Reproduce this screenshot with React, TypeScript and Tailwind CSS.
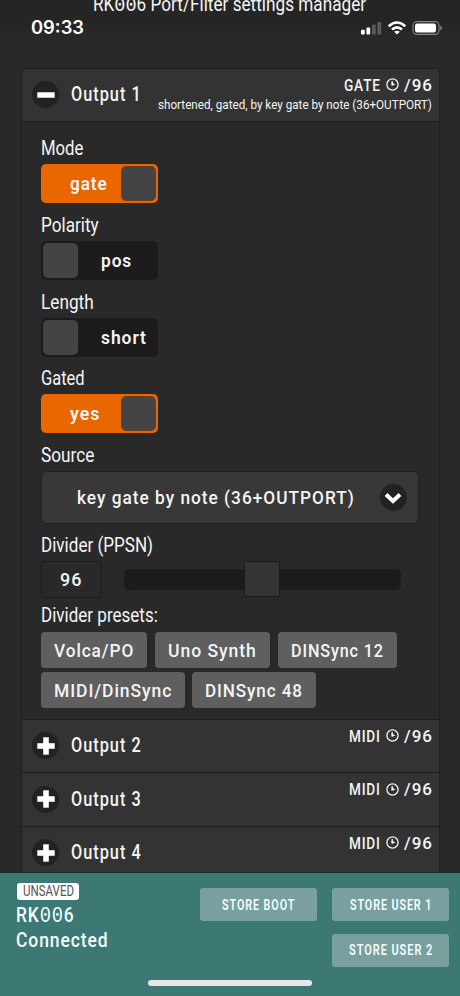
import { useLayoutEffect, useRef, useState } from "react";
import type { ReactNode } from "react";

/* Single line of text condensed or widened to fill the width of its box. */
function Fit({ className, children }: { className: string; children: ReactNode }) {
  const box = useRef<HTMLSpanElement>(null);
  const text = useRef<HTMLSpanElement>(null);
  const [scale, setScale] = useState(1);
  useLayoutEffect(() => {
    if (box.current && text.current) {
      setScale(box.current.clientWidth / text.current.offsetWidth);
    }
  }, []);
  return (
    <span ref={box} className={`block shrink-0 whitespace-nowrap ${className}`}>
      <span ref={text} className="inline-block origin-left" style={{ transform: `scaleX(${scale})` }}>
        {children}
      </span>
    </span>
  );
}

/* Zeros with a dot inside, as in the product name. */
function Zeros() {
  return <span className="font-['Liberation_Mono',monospace] text-[1.08em]">00</span>;
}

function Clock() {
  return (
    <svg className="h-[13px] w-[13px] shrink-0" viewBox="0 0 13 13" fill="none" stroke="#f4f4f4">
      <circle cx="6.5" cy="6.5" r="5.6" strokeWidth="1.3" />
      <path d="M6.2 2.9V7" strokeWidth="1.3" />
      <path d="M5.6 4.2L9.4 6.4L5.6 8z" fill="#f4f4f4" stroke="none" />
    </svg>
  );
}

function RoundIcon({ open }: { open: boolean }) {
  return (
    <span className="flex h-[27px] w-[27px] shrink-0 items-center justify-center rounded-full bg-[#222222]">
      <svg className="h-[18px] w-[18px]" viewBox="0 0 18 18" fill="#ffffff">
        <path d="M0.3 6.2H17.7V11.8H0.3z" />
        {!open && <path d="M6.2 0.3H11.8V17.7H6.2z" />}
      </svg>
    </span>
  );
}

function StatusBar() {
  return (
    <div className="flex h-5 shrink-0 items-center bg-gradient-to-b from-[#252525] via-[#262626] to-[#292929] pr-[18px] pl-[31px]">
      <Fit className="w-[53px] font-['Inter'] text-[18px] leading-5 font-semibold text-white">09:33</Fit>
      <svg className="ml-auto h-[14px] w-[82px]" viewBox="0 0 82 14" fill="#ffffff">
        <rect x="1" y="8.7" width="3.8" height="4.8" rx="1" />
        <rect x="6.4" y="6.4" width="3.8" height="7.1" rx="1" />
        <rect x="12" y="3.5" width="3.8" height="10" rx="1" fill="#5a5a5a" />
        <rect x="17.4" y="1" width="3.8" height="12.5" rx="1" fill="#5a5a5a" />
        <g fill="none" stroke="#ffffff" strokeWidth="2.5">
          <path d="M28.7 5.2Q37 -2.2 45.3 5.2" />
          <path d="M32 8.5Q37 4.2 42 8.5" />
        </g>
        <path d="M34.2 10.7Q37 8.6 39.8 10.7L37 13.5z" />
        <rect x="53" y="0.6" width="26" height="12.8" rx="3.8" fill="none" stroke="#858585" strokeWidth="1.1" />
        <rect x="55" y="2.5" width="21" height="9" rx="2.2" />
        <path d="M80.2 4.8Q82 5.3 82 7T80.2 9.2z" fill="#858585" />
      </svg>
    </div>
  );
}

function Header({ name, kind, kindWidth, note, open = false }: {
  name: string; kind: string; kindWidth: string; note?: string; open?: boolean;
}) {
  return (
    <div className="flex h-[53.3px] shrink-0 border-b border-[#1d1d1d] bg-[#333333] pr-[6px] pl-[10.5px]">
      <div className="flex h-[52px] items-center gap-3">
        <RoundIcon open={open} />
        <Fit className="w-[71px] pt-[1px] text-[19.5px] leading-6 font-medium tracking-[1.2px]">{name}</Fit>
      </div>
      <div className="ml-auto flex flex-col items-end pt-[7px]">
        <div className="flex h-[18px] items-center">
          <Fit className={`${kindWidth} text-[17px] leading-[18px] font-medium tracking-[1px]`}>{kind}</Fit>
          <span className="ml-[5px]"><Clock /></span>
          <Fit className="ml-[5.5px] w-[28.5px] text-[17px] leading-[18px] font-medium tracking-[1px]">/96</Fit>
        </div>
        {note && <Fit className="mt-[1px] mr-[1px] w-[274px] text-[13.5px] leading-[18px]">{note}</Fit>}
      </div>
    </div>
  );
}

function Toggle({ label, labelWidth, value, valueWidth, on }: {
  label: string; labelWidth: string; value: string; valueWidth: string; on: boolean;
}) {
  return (
    <div className="flex h-[76.7px] shrink-0 flex-col">
      <Fit className={`${labelWidth} text-[19.5px] leading-6`}>{label}</Fit>
      <div className={`mt-[3px] flex h-[39px] w-[117.5px] items-center rounded-[5px] ${on ? "bg-[#e96600]" : "bg-[#1c1c1c]"}`}>
        {!on && <span className="ml-[2px] h-[35px] w-[35px] rounded-[5px] bg-[#444444]" />}
        <Fit className={`${valueWidth} ${on ? "ml-[29.5px]" : "ml-[23px]"} pt-[1px] text-[19px] leading-6 font-semibold tracking-[1px]`}>{value}</Fit>
        {on && <span className="mr-[2px] ml-auto h-[35px] w-[35px] rounded-[5px] border border-[#684020] bg-[#444444]" />}
      </div>
    </div>
  );
}

function Preset({ box, text, children }: { box: string; text: string; children: string }) {
  return (
    <button className={`flex h-[35.5px] items-center justify-center rounded-[4px] bg-[#5f5f5f] ${box}`}>
      <Fit className={`${text} pt-[2px] text-left text-[19px] leading-6 font-medium tracking-[1px]`}>{children}</Fit>
    </button>
  );
}

function StoreButton({ text, children }: { text: string; children: string }) {
  return (
    <button className="flex h-[33px] w-[117px] items-center justify-center rounded-[3px] bg-[#799f9f]">
      <Fit className={`${text} text-left text-[14px] leading-4 font-semibold tracking-[1.2px]`}>{children}</Fit>
    </button>
  );
}

export default function App() {
  return (
    <div className="flex h-[996px] w-[460px] flex-col overflow-hidden bg-[#292929] font-['Roboto',sans-serif] text-[#f4f4f4]">
      <div className="flex h-[18px] shrink-0 items-start bg-[#252525] pl-[93px]">
        <Fit className="-mt-[7px] w-[273px] text-[19.5px] leading-6">RK<Zeros />6 Port/Filter settings manager</Fit>
      </div>
      <StatusBar />
      <main className="mx-[20.5px] mt-[29.5px] flex min-h-0 grow flex-col overflow-hidden rounded-t-[5px] border border-b-0 border-[#1f1f1f]">
        <Header name="Output 1" kind="GATE" kindWidth="w-[36.5px]" note="shortened, gated, by key gate by note (36+OUTPORT)" open />
        <section className="flex h-[598.2px] shrink-0 flex-col border-b border-[#1d1d1d] bg-[#292929] pt-[15.5px] pl-[19px]">
          <Toggle label="Mode" labelWidth="w-[42px]" value="gate" valueWidth="w-[38px]" on />
          <Toggle label="Polarity" labelWidth="w-[58px]" value="pos" valueWidth="w-[31px]" on={false} />
          <Toggle label="Length" labelWidth="w-[53px]" value="short" valueWidth="w-[46px]" on={false} />
          <Toggle label="Gated" labelWidth="w-[44px]" value="yes" valueWidth="w-[30px]" on />
          <Fit className="w-[53px] text-[19.5px] leading-6">Source</Fit>
          <div className="mt-[3px] flex h-[53px] w-[378px] shrink-0 items-center rounded-[5px] border border-[#202020] bg-[#383838] pr-[11px] pl-[35px]">
            <Fit className="w-[278px] pt-[1px] text-[19px] leading-6 font-medium tracking-[1.1px]">key gate by note (36+OUTPORT)</Fit>
            <span className="ml-auto flex h-[27px] w-[27px] items-center justify-center rounded-full bg-[#222222]">
              <svg className="h-[12px] w-[18px]" viewBox="0 0 18 12" fill="none" stroke="#ffffff" strokeWidth="4">
                <path d="M2 2.5L9 9L16 2.5" />
              </svg>
            </span>
          </div>
          <Fit className="mt-[10px] w-[112px] text-[19.5px] leading-6">Divider (PPSN)</Fit>
          <div className="mt-[2.5px] flex h-[37px] shrink-0 items-center">
            <span className="flex h-[37px] w-[61px] items-center justify-center rounded-[4px] border border-[#1c1c1c]">
              <Fit className="w-[22px] pt-[1px] text-[18px] leading-6 font-medium tracking-[1px]">96</Fit>
            </span>
            <div className="ml-[22px] flex h-[21px] w-[277px] items-center rounded-[5px] bg-[#1c1c1c] pl-[120.5px]">
              <span className="h-[36px] w-[36px] rounded-[2px] border border-[#1c1c1c] bg-[#343434]" />
            </div>
          </div>
          <Fit className="mt-[6.5px] w-[117px] text-[19.5px] leading-6">Divider presets:</Fit>
          <div className="mt-[4px] flex flex-wrap gap-x-[7.5px] gap-y-[4.8px]">
            <Preset box="w-[106.5px]" text="w-[80px]">Volca/PO</Preset>
            <Preset box="w-[115.5px]" text="w-[89px]">Uno Synth</Preset>
            <Preset box="w-[119px]" text="w-[93px]">DINSync 12</Preset>
            <Preset box="w-[144px]" text="w-[118px]">MIDI/DinSync</Preset>
            <Preset box="w-[124px]" text="w-[98px]">DINSync 48</Preset>
          </div>
        </section>
        <Header name="Output 2" kind="MIDI" kindWidth="w-[32px]" />
        <Header name="Output 3" kind="MIDI" kindWidth="w-[32px]" />
        <Header name="Output 4" kind="MIDI" kindWidth="w-[32px]" />
      </main>
      <footer className="flex h-[124px] shrink-0 flex-col border-t border-[#1b2927] bg-[#3c7975] text-[#f4ffff]">
        <div className="flex h-[110px] pl-[16px]">
          <div className="flex w-[184px] flex-col pt-[10px]">
            <span className="ml-[1px] flex h-[17px] w-[62px] items-center justify-center rounded-[3px] bg-white text-[#555555]">
              <Fit className="w-[51px] text-[14px] leading-[17px]">UNSAVED</Fit>
            </span>
            <Fit className="mt-[3px] h-[25px] w-[59px] text-[20px] leading-[25px] font-medium tracking-[1px]">RK<Zeros />6</Fit>
            <Fit className="w-[92px] text-[20px] leading-[25px] font-medium tracking-[1px]">Connected</Fit>
          </div>
          <div className="grid h-fit grid-cols-[117px_117px] gap-x-[15px] gap-y-[12.5px] pt-[15px]">
            <StoreButton text="w-[73px]">STORE BOOT</StoreButton>
            <StoreButton text="w-[82px]">STORE USER 1</StoreButton>
            <span />
            <StoreButton text="w-[84px]">STORE USER 2</StoreButton>
          </div>
        </div>
        <div className="mx-auto -mt-[3px] h-[6px] w-[164px] rounded-full bg-[#e8e8ea]" />
      </footer>
    </div>
  );
}
